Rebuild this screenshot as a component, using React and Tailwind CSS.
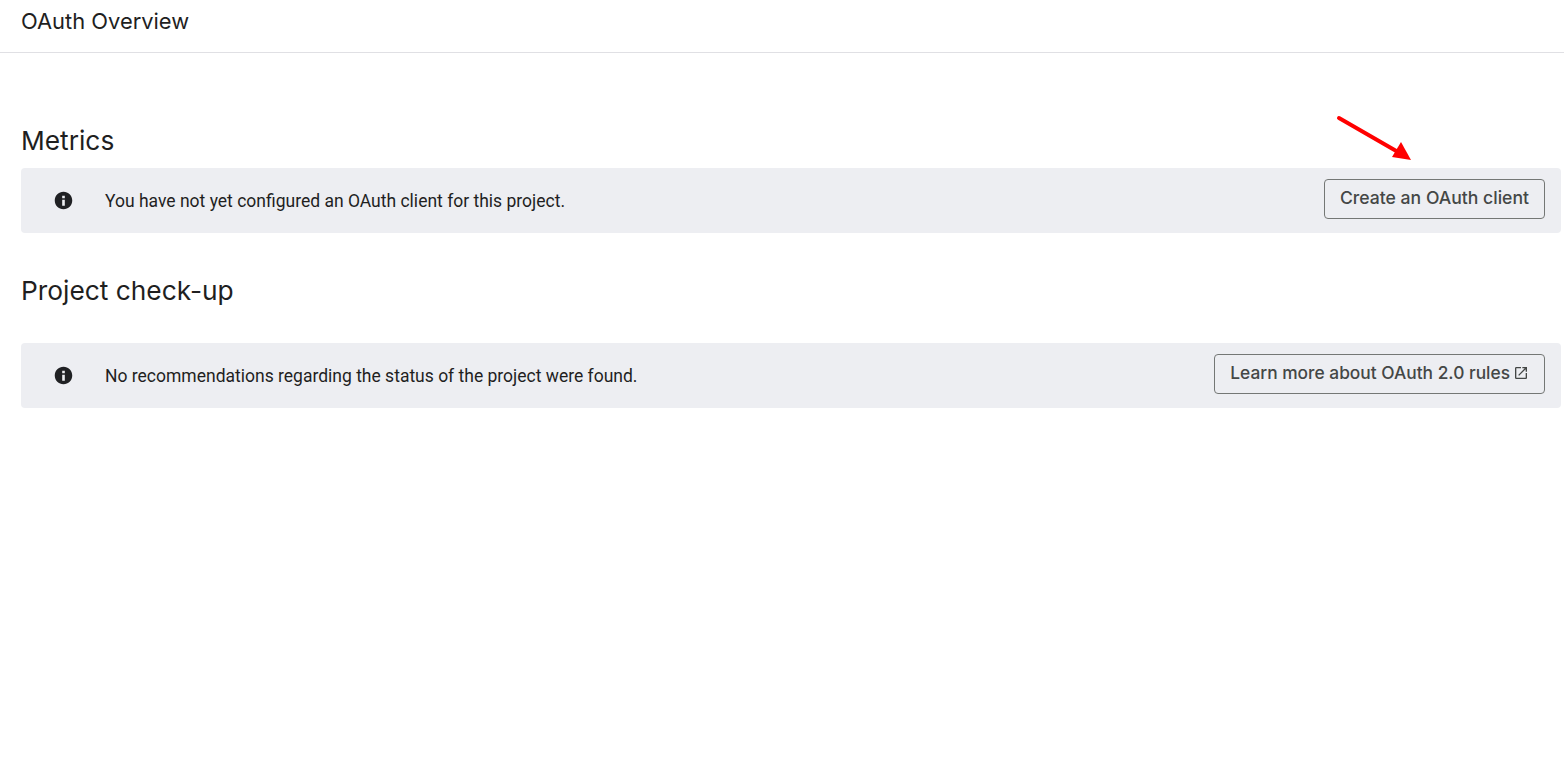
import React from 'react';
import { MdOpenInNew } from 'react-icons/md';

const InfoIcon = () => (
  <svg width="21" height="21" viewBox="0 0 24 24" fill="#202124">
    <path d="M12 2C6.48 2 2 6.48 2 12s4.48 10 10 10 10-4.48 10-10S17.52 2 12 2zm1.5 16h-3v-7h3v7zm0-8.5h-3V6.5h3v3z" />
  </svg>
);

const Banner = ({ text, children }) => (
  <div className="flex h-[65px] items-center rounded-[4px] bg-[#edeef2] pr-4">
    <div className="mb-[1px] flex w-[84px] shrink-0 justify-center">
      <InfoIcon />
    </div>
    <p className="mt-[1px] flex-1 font-['Roboto',sans-serif] text-[17.5px] text-[#1f1f1f]">{text}</p>
    {children}
  </div>
);

const OutlineButton = ({ size, children }) => (
  <button className={`mb-[4px] flex h-10 items-center rounded-[4px] border border-[#747775] px-[15px] pb-[1px] font-['Inter',sans-serif] font-medium text-[#444746] ${size}`}>
    {children}
  </button>
);

const App = () => {
  return (
    <div className="relative min-h-[766px] bg-white font-['Inter',sans-serif] text-[#1f1f1f]">
      <header className="flex h-[53px] items-start border-b border-[#e0e0e4] pl-[21px]">
        <h1 className="pt-[5px] text-[21.9px] leading-[32px]">OAuth Overview</h1>
      </header>

      <main className="pl-[21px] pr-[3px]">
        <h2 className="pt-[70px] pb-[10px] text-[26.3px] leading-[35px]">Metrics</h2>
        <Banner text="You have not yet configured an OAuth client for this project.">
          <OutlineButton size="text-[17.6px]">Create an OAuth client</OutlineButton>
        </Banner>

        <h2 className="pt-[40px] pb-[35px] text-[26.3px] leading-[35px]">Project check-up</h2>
        <Banner text="No recommendations regarding the status of the project were found.">
          <OutlineButton size="text-[17.35px]">
            Learn more about OAuth 2.0 rules
            <MdOpenInNew className="ml-[3px] text-[#444746]" size={16} />
          </OutlineButton>
        </Banner>
      </main>

      {/* red annotation arrow on top of the page */}
      <svg className="absolute left-[1330px] top-[110px]" width="90" height="56" viewBox="0 0 90 56">
        <line x1="9" y1="8" x2="68" y2="42" stroke="#ff0000" strokeWidth="4" strokeLinecap="round" />
        <polygon points="81,50 62,47 71,32" fill="#ff0000" />
      </svg>
    </div>
  );
};

export default App;
